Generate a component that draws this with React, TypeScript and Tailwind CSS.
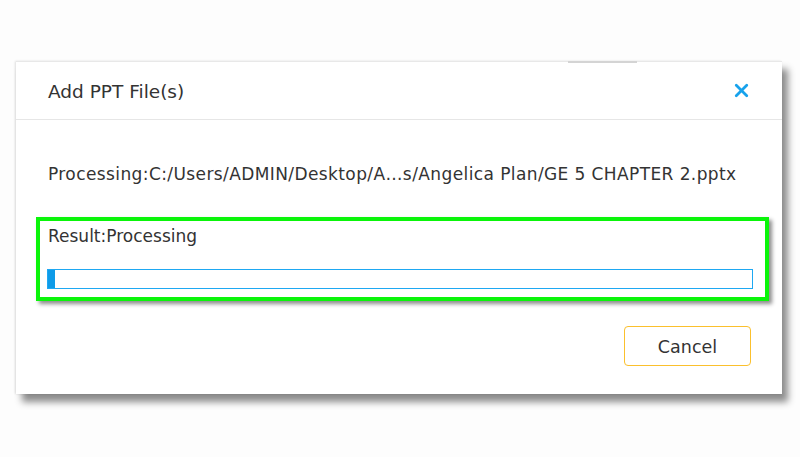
import { X } from "lucide-react";

export default function App() {
  const progress = 1;
  return (
    <div
      className="h-[457px] w-[800px] bg-[#fdfdfd] pl-[16px] pt-[61px]"
      style={{ fontFamily: '"DejaVu Sans", "Liberation Sans", Arial, sans-serif' }}
    >
      <div className="relative flex h-[333px] w-[766px] flex-col border-t border-[#e8e8e8] bg-white shadow-[6px_8px_7px_rgba(0,0,0,0.45),-1px_0_2px_rgba(0,0,0,0.12)]">
        <div className="absolute -top-px left-[552px] h-[2px] w-[69px] bg-[#d4d4d4]" />
        <div className="flex h-[58px] items-center justify-between border-b border-[#e6e6e6] pl-[32px] pr-[30px]">
          <span className="pt-[3px] text-[18.5px] text-[#333]">Add PPT File(s)</span>
          <X className="h-[21px] w-[21px] text-[#17a2ec]" strokeWidth={3.2} />
        </div>
        <div className="mt-[42px] pl-[32px] text-[17px] leading-[24px] tracking-[0.4px] text-[#333]">
          Processing:C:/Users/ADMIN/Desktop/A…s/Angelica Plan/GE 5 CHAPTER 2.pptx
        </div>
        <div className="ml-[20px] mr-[13px] mt-[31px] border-4 border-[#0af50a] pb-[8px] pl-[7px] pr-[12px] pt-[3px] shadow-[3px_3px_4px_rgba(0,0,0,0.45)]">
          <div className="pl-[1px] text-[17px] leading-[24px] text-[#333]">Result:Processing</div>
          <div className="mt-[21px] h-[20px] border border-[#1ea8f2] bg-white">
            <div className="h-full bg-[#0e9be8]" style={{ width: `${progress}%` }} />
          </div>
        </div>
        <div className="mr-[31px] mt-[25px] flex justify-end">
          <button className="h-[40px] w-[127px] rounded-[4px] border border-[#fbc02d] bg-white pt-[3px] text-[17.5px] text-[#333]">
            Cancel
          </button>
        </div>
      </div>
    </div>
  );
}
